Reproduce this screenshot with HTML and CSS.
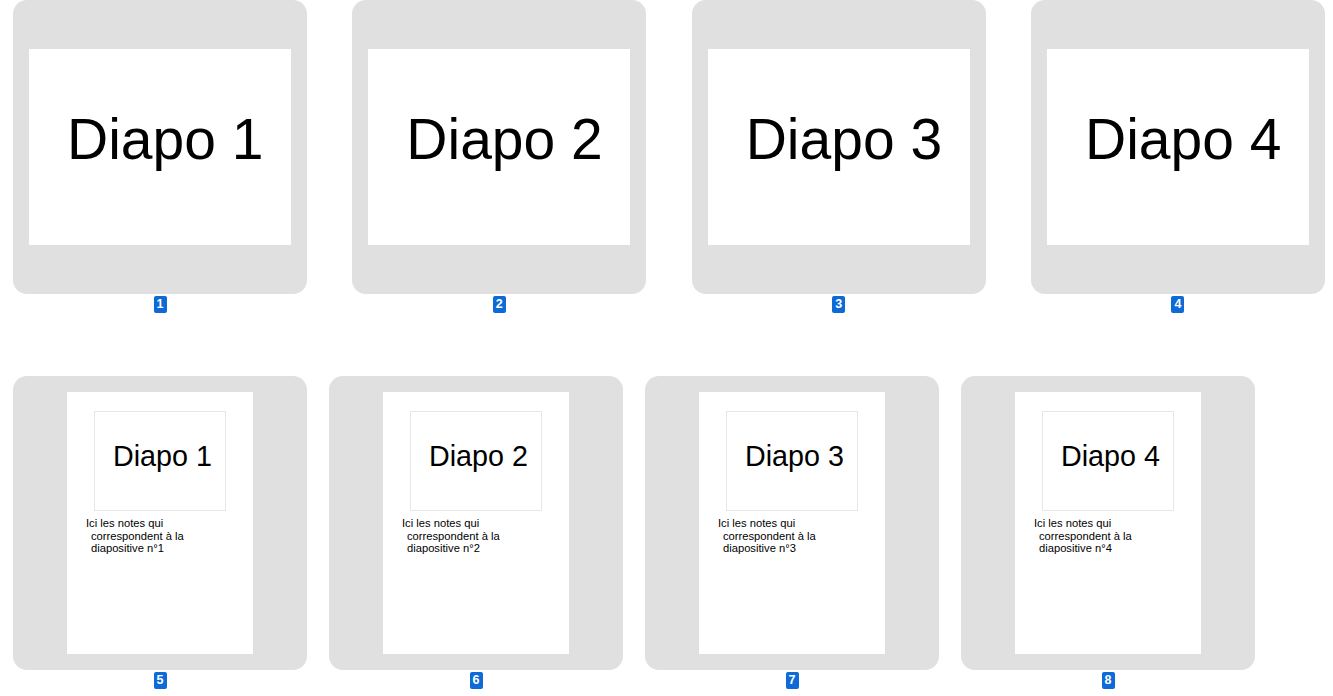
FILE: index.html
```html
<!DOCTYPE html>
<html lang="fr">
<head>
<meta charset="utf-8">
<title>Diapositives</title>
<link rel="stylesheet" href="styles.css">
</head>
<body>
<div class="row row-slides">
  <div class="item">
    <div class="card"><div class="slide"><span class="slide-title">Diapo 1</span></div></div>
    <span class="badge">1</span>
  </div>
  <div class="item">
    <div class="card"><div class="slide"><span class="slide-title">Diapo 2</span></div></div>
    <span class="badge">2</span>
  </div>
  <div class="item">
    <div class="card"><div class="slide"><span class="slide-title">Diapo 3</span></div></div>
    <span class="badge">3</span>
  </div>
  <div class="item">
    <div class="card"><div class="slide"><span class="slide-title">Diapo 4</span></div></div>
    <span class="badge">4</span>
  </div>
</div>
<div class="row row-notes">
  <div class="item">
    <div class="card card-notes">
      <div class="page">
        <div class="thumb"><span class="thumb-title">Diapo 1</span></div>
        <p class="notes">Ici les notes qui correspondent à la diapositive n°1</p>
      </div>
    </div>
    <span class="badge">5</span>
  </div>
  <div class="item">
    <div class="card card-notes">
      <div class="page">
        <div class="thumb"><span class="thumb-title">Diapo 2</span></div>
        <p class="notes">Ici les notes qui correspondent à la diapositive n°2</p>
      </div>
    </div>
    <span class="badge">6</span>
  </div>
  <div class="item">
    <div class="card card-notes">
      <div class="page">
        <div class="thumb"><span class="thumb-title">Diapo 3</span></div>
        <p class="notes">Ici les notes qui correspondent à la diapositive n°3</p>
      </div>
    </div>
    <span class="badge">7</span>
  </div>
  <div class="item">
    <div class="card card-notes">
      <div class="page">
        <div class="thumb"><span class="thumb-title">Diapo 4</span></div>
        <p class="notes">Ici les notes qui correspondent à la diapositive n°4</p>
      </div>
    </div>
    <span class="badge">8</span>
  </div>
</div>
</body>
</html>
```
FILE: styles.css
```css
html, body {
  margin: 0;
  padding: 0;
  background: #ffffff;
  font-family: "Liberation Sans", Arial, sans-serif;
  color: #000;
}

.row {
  display: flex;
  padding: 0 8px 0 13px;
}

.row-slides {
  justify-content: space-between;
}

.row-notes {
  gap: 22px;
  margin-top: 63px;
}

.item {
  display: flex;
  flex-direction: column;
  align-items: center;
  width: 294px;
}

.card {
  width: 294px;
  height: 294px;
  background: #e0e0e0;
  border-radius: 14px;
  display: flex;
  align-items: center;
  justify-content: center;
}

.slide {
  width: 262px;
  height: 196px;
  background: #fff;
  box-sizing: border-box;
  padding: 62px 0 0 38px;
}

.slide-title {
  display: block;
  font-size: 57px;
  line-height: 1;
  white-space: nowrap;
}

.card-notes {
  align-items: flex-start;
  padding-top: 16px;
  box-sizing: border-box;
}

.page {
  width: 186px;
  height: 262px;
  background: #fff;
  box-sizing: border-box;
  padding-top: 19px;
}

.thumb {
  width: 132px;
  height: 100px;
  margin: 0 auto;
  box-sizing: border-box;
  border: 1px solid #e6e6e6;
  padding: 30px 0 0 18px;
}

.thumb-title {
  display: block;
  font-size: 28.7px;
  line-height: 1;
  white-space: nowrap;
}

.notes {
  margin: 6px 0 0 19px;
  width: 134px;
  box-sizing: border-box;
  padding-left: 5px;
  text-indent: -5px;
  font-size: 11.2px;
  line-height: 12.6px;
}

.badge {
  margin-top: 2px;
  min-width: 13px;
  height: 17px;
  box-sizing: border-box;
  padding: 0 3px;
  background: #0e6ad6;
  color: #fff;
  border-radius: 2px;
  font-size: 12.5px;
  font-weight: bold;
  line-height: 17px;
  text-align: center;
}
```
